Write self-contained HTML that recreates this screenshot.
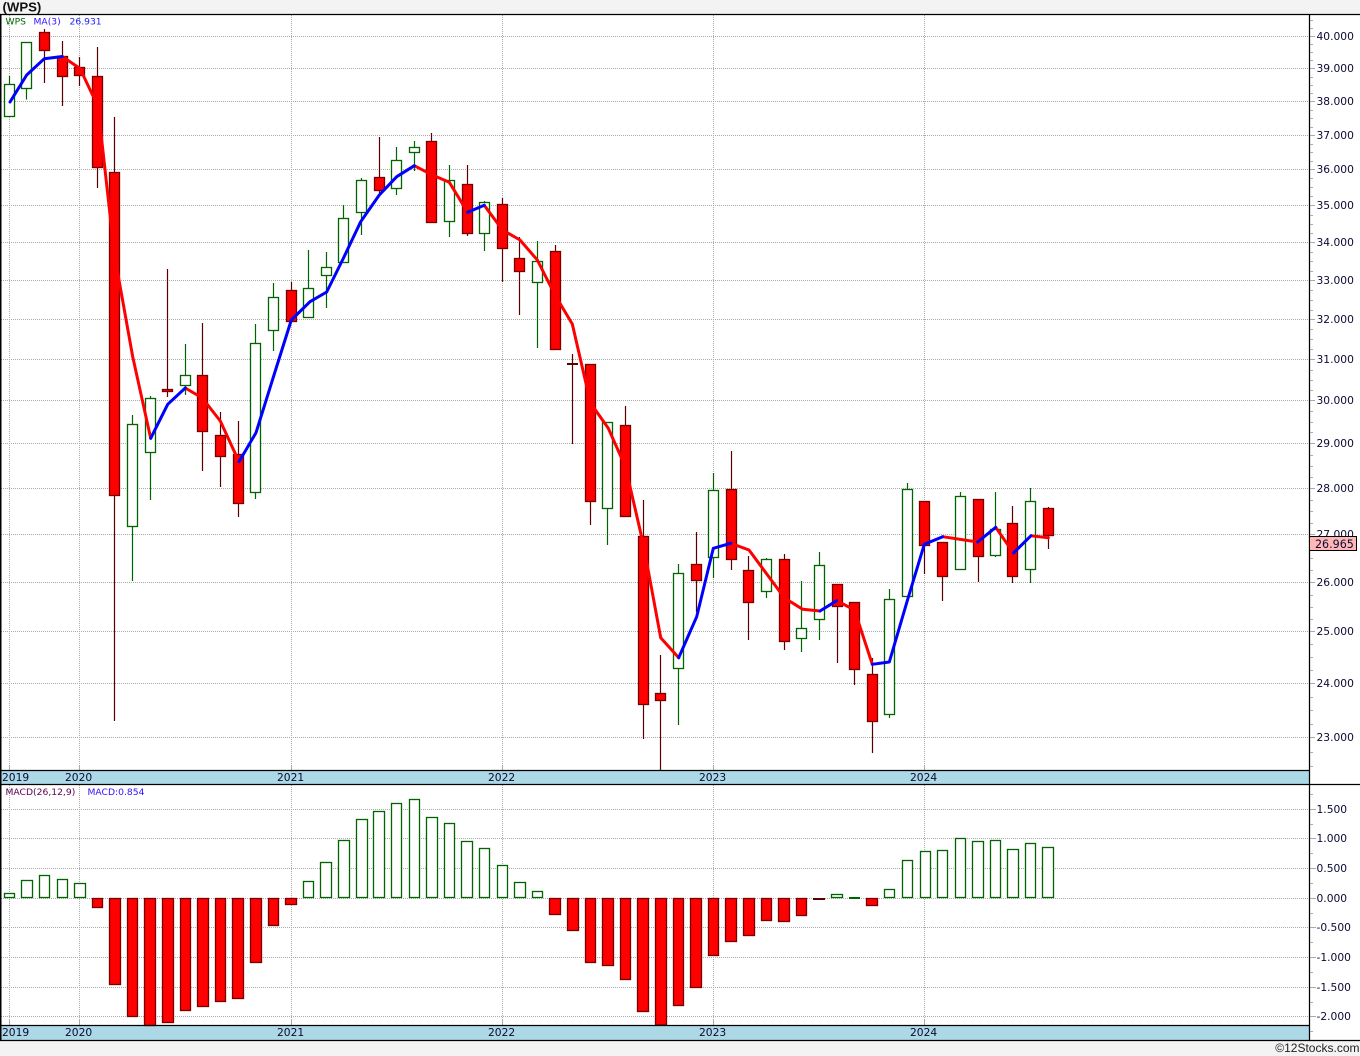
<!DOCTYPE html>
<html><head><meta charset="utf-8"><title>(WPS)</title>
<style>
html,body{margin:0;padding:0;background:#f3f3f3;width:1360px;height:1056px;overflow:hidden}
svg{display:block;position:absolute;left:0;top:0}
.ax{font:10.7px "DejaVu Sans",sans-serif;fill:#0a0a33}
.lg{font:9.2px "DejaVu Sans",sans-serif}
</style></head><body>
<svg width="1360" height="1056" viewBox="0 0 1360 1056" xmlns="http://www.w3.org/2000/svg">
<rect x="0" y="14" width="1360" height="1027" fill="#fff"/>
<text x="2.5" y="11.5" font-family="'Liberation Sans',sans-serif" font-weight="700" font-size="13.2" fill="#111">(WPS)</text>
<!-- bands -->
<rect x="1" y="771" width="1308" height="13" fill="#add8e6"/>
<rect x="1" y="1026" width="1308" height="14" fill="#add8e6"/>
<!-- grid -->
<g stroke="#aaa" stroke-width="1" stroke-dasharray="1 1" fill="none" shape-rendering="crispEdges">
<path d="M1 36.5H1309M1 68.5H1309M1 101.5H1309M1 135.5H1309M1 169.5H1309M1 205.5H1309M1 242.5H1309M1 280.5H1309M1 319.5H1309M1 359.5H1309M1 400.5H1309M1 443.5H1309M1 488.5H1309M1 534.5H1309M1 582.5H1309M1 631.5H1309M1 683.5H1309M1 737.5H1309"/>
<path d="M1 809.5H1309M1 838.5H1309M1 868.5H1309M1 898.5H1309M1 927.5H1309M1 957.5H1309M1 987.5H1309M1 1016.5H1309"/>
<path d="M9.5 15V770M79.5 15V770M291.5 15V770M502.5 15V770M713.5 15V770M924.5 15V770"/>
<path d="M9.5 785V1025M79.5 785V1025M291.5 785V1025M502.5 785V1025M713.5 785V1025M924.5 785V1025"/>
</g>
<path d="M9.5 765V770M79.5 765V770M291.5 765V770M502.5 765V770M713.5 765V770M924.5 765V770M9.5 1020V1025M79.5 1020V1025M291.5 1020V1025M502.5 1020V1025M713.5 1020V1025M924.5 1020V1025" stroke="#aaa" fill="none" shape-rendering="crispEdges"/>
<!-- wicks -->
<path stroke-width="1.2" stroke="#006400" fill="none" d="M9.5 76V116M26.5 43V99.5M132.5 415V581M150.5 396V500M185.5 344V395M255.5 324V499M273.5 283V351M308.5 250V318M326.5 252V308M343.5 205V263M361.5 178V235M396.5 147V195M414.5 141V171M449.5 165V237M484.5 201V251M537.5 241V348M607.5 423V545M678.5 564V725M713.5 473V578M766.5 558V598M801.5 581V652M819.5 552V640M889.5 589V718M907.5 483V597M960.5 492V570M995.5 492V557M1030.5 488V583"/>
<path stroke-width="1.2" stroke="#5a0000" fill="none" d="M44.5 29V83M62.5 41V106M79.5 57V86M97.5 47V188M114.5 117V721M167.5 269V397M202.5 323V471M220.5 412V487M238.5 421V517M291.5 282V322M379.5 137V193M431.5 133V223M467.5 165V236M502.5 198V282M519.5 237V315M555.5 245V350M572.5 354V444M590.5 364V525M625.5 406V517M643.5 500V739M660.5 655V771M696.5 532V612M731.5 451V570M748.5 556V640M784.5 554V650M837.5 584V663M854.5 602V685M872.5 658V753M924.5 501V574M942.5 542V601M978.5 499V582M1012.5 506V583M1048.5 507V549"/>
<!-- green candle bodies -->
<g fill="#fff" stroke="#006400" stroke-width="1.3">
<rect x="4.5" y="84.5" width="10" height="32"/>
<rect x="21.5" y="42.5" width="10" height="46"/>
<rect x="127.5" y="424.5" width="10" height="102"/>
<rect x="145.5" y="398.5" width="10" height="54"/>
<rect x="180.5" y="375.5" width="10" height="10"/>
<rect x="250.5" y="343.5" width="10" height="149"/>
<rect x="268.5" y="297.5" width="10" height="33"/>
<rect x="303.5" y="288.5" width="10" height="29"/>
<rect x="321.5" y="267.5" width="10" height="8"/>
<rect x="338.5" y="218.5" width="10" height="44"/>
<rect x="356.5" y="180.5" width="10" height="32"/>
<rect x="391.5" y="160.5" width="10" height="28"/>
<rect x="409.5" y="147.5" width="10" height="5"/>
<rect x="444.5" y="180.5" width="10" height="41"/>
<rect x="479.5" y="202.5" width="10" height="31"/>
<rect x="532.5" y="261.5" width="10" height="21"/>
<rect x="602.5" y="422.5" width="10" height="86"/>
<rect x="673.5" y="573.5" width="10" height="95"/>
<rect x="708.5" y="490.5" width="10" height="67"/>
<rect x="761.5" y="559.5" width="10" height="32"/>
<rect x="796.5" y="628.5" width="10" height="10"/>
<rect x="814.5" y="565.5" width="10" height="54"/>
<rect x="884.5" y="599.5" width="10" height="115"/>
<rect x="902.5" y="489.5" width="10" height="107"/>
<rect x="955.5" y="496.5" width="10" height="73"/>
<rect x="990.5" y="529.5" width="10" height="26"/>
<rect x="1025.5" y="501.5" width="10" height="68"/>
</g>
<!-- red candle bodies -->
<g fill="#f00" stroke="#7a0000" stroke-width="1.3">
<rect x="39.5" y="32.5" width="10" height="18"/>
<rect x="57.5" y="56.5" width="10" height="20"/>
<rect x="74.5" y="67.5" width="10" height="8"/>
<rect x="92.5" y="76.5" width="10" height="91"/>
<rect x="109.5" y="172.5" width="10" height="323"/>
<rect x="162.5" y="389.5" width="10" height="2"/>
<rect x="197.5" y="375.5" width="10" height="56"/>
<rect x="215.5" y="435.5" width="10" height="21"/>
<rect x="233.5" y="454.5" width="10" height="49"/>
<rect x="286.5" y="290.5" width="10" height="31"/>
<rect x="374.5" y="177.5" width="10" height="13"/>
<rect x="426.5" y="141.5" width="10" height="81"/>
<rect x="462.5" y="184.5" width="10" height="49"/>
<rect x="497.5" y="204.5" width="10" height="44"/>
<rect x="514.5" y="258.5" width="10" height="13"/>
<rect x="550.5" y="251.5" width="10" height="98"/>
<rect x="585.5" y="364.5" width="10" height="137"/>
<rect x="620.5" y="425.5" width="10" height="91"/>
<rect x="638.5" y="536.5" width="10" height="168"/>
<rect x="655.5" y="693.5" width="10" height="7"/>
<rect x="691.5" y="564.5" width="10" height="16"/>
<rect x="726.5" y="489.5" width="10" height="70"/>
<rect x="743.5" y="570.5" width="10" height="32"/>
<rect x="779.5" y="559.5" width="10" height="82"/>
<rect x="832.5" y="584.5" width="10" height="22"/>
<rect x="849.5" y="602.5" width="10" height="67"/>
<rect x="867.5" y="674.5" width="10" height="47"/>
<rect x="919.5" y="501.5" width="10" height="44"/>
<rect x="937.5" y="542.5" width="10" height="34"/>
<rect x="973.5" y="499.5" width="10" height="57"/>
<rect x="1007.5" y="523.5" width="10" height="53"/>
<rect x="1043.5" y="508.5" width="10" height="27"/>
</g>
<path d="M567 364H578" stroke="#5a0000" stroke-width="2" fill="none"/>
<!-- moving average -->
<g fill="none" stroke-width="3" stroke-linejoin="round" stroke-linecap="round">
<path stroke="#f00" d="M62.3 56.5L80 68.5L93.5 97L97.5 102L114.5 255L132.7 356.7L150.7 438.3"/>
<path stroke="#f00" d="M185.3 388L202.3 398L220.3 421L239 461.7"/>
<path stroke="#f00" d="M414.3 165.7L431.7 174.7L449.3 182.3L467.7 212.3"/>
<path stroke="#f00" d="M484.3 205.3L502.5 230L520 240L537.3 260L555 295L572.3 324L590.5 403L608.3 428.3L625.5 467L643.5 545L660.7 637.7L678.7 657.7"/>
<path stroke="#f00" d="M730.7 543.3L749 550L784.5 598L802.7 609.3L820 611"/>
<path stroke="#f00" d="M836.7 600.7L854.5 610L872.3 664.3"/>
<path stroke="#f00" d="M942.7 536.7L977.7 542"/>
<path stroke="#f00" d="M995.7 527.3L1013.5 553"/>
<path stroke="#f00" d="M1031 535.7L1048.3 537.7"/>
<path stroke="#00f" d="M10 102L26.7 75L44.3 58.7L62.3 56.5"/>
<path stroke="#00f" d="M150.7 438.3L167.7 404.3L185.3 388"/>
<path stroke="#00f" d="M239 461.7L256 432.7L274 375L291.3 320L310 301.7L326.7 292L343.5 258L360.7 221.7L379.3 195L396.7 176.7L414.3 165.7"/>
<path stroke="#00f" d="M467.7 212.3L484.3 205.3"/>
<path stroke="#00f" d="M678.7 657.7L696.7 616.7L713.3 548.3L730.7 543.3"/>
<path stroke="#00f" d="M820 611L836.7 600.7"/>
<path stroke="#00f" d="M872.3 664.3L889.3 662L907.5 600L924.3 544.3L942.7 536.7"/>
<path stroke="#00f" d="M977.7 542L995.7 527.3"/>
<path stroke="#00f" d="M1013.5 553L1031 535.7"/>
</g>
<!-- MACD bars -->
<g fill="#fff" stroke="#006400" stroke-width="1.3">
<rect x="4.5" y="893.5" width="10" height="4"/>
<rect x="21.5" y="880.5" width="11" height="17"/>
<rect x="39.5" y="875.5" width="10" height="22"/>
<rect x="57.5" y="879.5" width="10" height="18"/>
<rect x="74.5" y="883.5" width="11" height="14"/>
<rect x="303.5" y="881.5" width="10" height="16"/>
<rect x="320.5" y="862.5" width="11" height="35"/>
<rect x="338.5" y="840.5" width="11" height="57"/>
<rect x="356.5" y="819.5" width="11" height="78"/>
<rect x="373.5" y="811.5" width="11" height="86"/>
<rect x="391.5" y="803.5" width="10" height="94"/>
<rect x="409.5" y="799.5" width="10" height="98"/>
<rect x="426.5" y="817.5" width="11" height="80"/>
<rect x="444.5" y="823.5" width="10" height="74"/>
<rect x="461.5" y="841.5" width="11" height="56"/>
<rect x="479.5" y="848.5" width="10" height="49"/>
<rect x="497.5" y="865.5" width="10" height="32"/>
<rect x="514.5" y="882.5" width="11" height="15"/>
<rect x="532.5" y="891.5" width="10" height="6"/>
<rect x="831.5" y="894.5" width="11" height="3"/>
<rect x="884.5" y="889.5" width="10" height="8"/>
<rect x="902.5" y="860.5" width="10" height="37"/>
<rect x="920.5" y="851.5" width="10" height="46"/>
<rect x="937.5" y="850.5" width="10" height="47"/>
<rect x="955.5" y="838.5" width="10" height="59"/>
<rect x="972.5" y="841.5" width="11" height="56"/>
<rect x="990.5" y="840.5" width="10" height="57"/>
<rect x="1007.5" y="849.5" width="11" height="48"/>
<rect x="1025.5" y="843.5" width="10" height="54"/>
<rect x="1042.5" y="847.5" width="11" height="50"/>
</g>
<g fill="#f00" stroke="#7a0000" stroke-width="1.3">
<rect x="92.5" y="898.5" width="10" height="9"/>
<rect x="109.5" y="898.5" width="11" height="86"/>
<rect x="127.5" y="898.5" width="10" height="118"/>
<rect x="144.5" y="898.5" width="11" height="127"/>
<rect x="162.5" y="898.5" width="11" height="124"/>
<rect x="180.5" y="898.5" width="10" height="112"/>
<rect x="197.5" y="898.5" width="11" height="108"/>
<rect x="215.5" y="898.5" width="10" height="103"/>
<rect x="232.5" y="898.5" width="11" height="100"/>
<rect x="250.5" y="898.5" width="11" height="64"/>
<rect x="268.5" y="898.5" width="10" height="27"/>
<rect x="285.5" y="898.5" width="11" height="6"/>
<rect x="549.5" y="898.5" width="11" height="16"/>
<rect x="567.5" y="898.5" width="11" height="32"/>
<rect x="585.5" y="898.5" width="10" height="64"/>
<rect x="602.5" y="898.5" width="11" height="67"/>
<rect x="620.5" y="898.5" width="10" height="81"/>
<rect x="637.5" y="898.5" width="11" height="113"/>
<rect x="655.5" y="898.5" width="11" height="126.5"/>
<rect x="673.5" y="898.5" width="10" height="107"/>
<rect x="690.5" y="898.5" width="11" height="89"/>
<rect x="708.5" y="898.5" width="10" height="57"/>
<rect x="725.5" y="898.5" width="11" height="43"/>
<rect x="743.5" y="898.5" width="11" height="37"/>
<rect x="761.5" y="898.5" width="10" height="22"/>
<rect x="778.5" y="898.5" width="11" height="23"/>
<rect x="796.5" y="898.5" width="10" height="17"/>
<rect x="866.5" y="898.5" width="11" height="7"/>
</g>
<path d="M813 899H825" stroke="#5a0000" stroke-width="2" fill="none" shape-rendering="crispEdges"/>
<path d="M849 898H860" stroke="#006400" stroke-width="2" fill="none" shape-rendering="crispEdges"/>
<!-- frame -->
<g stroke="#000" stroke-width="1.25" fill="none">
<path d="M0 14.5H1360"/>
<path d="M0.75 14V1041" stroke-width="1.5"/>
<path d="M1309.5 14V1041"/>
<path d="M0 770.5H1309"/>
<path d="M0 784.5H1360"/>
<path d="M0 1025.5H1309"/>
<path d="M0 1040.5H1360"/>
</g>
<!-- axis ticks -->
<path shape-rendering="crispEdges" stroke="#aaa" fill="none" d="M1310 36.5H1315M1310 68.5H1315M1310 101.5H1315M1310 135.5H1315M1310 169.5H1315M1310 205.5H1315M1310 242.5H1315M1310 280.5H1315M1310 319.5H1315M1310 359.5H1315M1310 400.5H1315M1310 443.5H1315M1310 488.5H1315M1310 534.5H1315M1310 582.5H1315M1310 631.5H1315M1310 683.5H1315M1310 737.5H1315M1310 20.5H1313M1310 28.5H1313M1310 44.5H1313M1310 52.5H1313M1310 60.5H1313M1310 77.5H1313M1310 85.5H1313M1310 93.5H1313M1310 110.5H1313M1310 118.5H1313M1310 127.5H1313M1310 144.5H1313M1310 152.5H1313M1310 161.5H1313M1310 178.5H1313M1310 187.5H1313M1310 196.5H1313M1310 215.5H1313M1310 224.5H1313M1310 233.5H1313M1310 252.5H1313M1310 261.5H1313M1310 271.5H1313M1310 290.5H1313M1310 300.5H1313M1310 310.5H1313M1310 329.5H1313M1310 339.5H1313M1310 349.5H1313M1310 370.5H1313M1310 380.5H1313M1310 390.5H1313M1310 411.5H1313M1310 422.5H1313M1310 432.5H1313M1310 455.5H1313M1310 466.5H1313M1310 477.5H1313M1310 500.5H1313M1310 511.5H1313M1310 523.5H1313M1310 546.5H1313M1310 558.5H1313M1310 570.5H1313M1310 595.5H1313M1310 607.5H1313M1310 619.5H1313M1310 644.5H1313M1310 657.5H1313M1310 670.5H1313M1310 697.5H1313M1310 710.5H1313M1310 724.5H1313M1310 752.5H1313M1310 766.5H1313"/>
<path shape-rendering="crispEdges" stroke="#aaa" fill="none" d="M1310 809.5H1316M1310 838.5H1316M1310 868.5H1316M1310 898.5H1316M1310 927.5H1316M1310 957.5H1316M1310 987.5H1316M1310 1016.5H1316M1310 794.5H1313M1310 824.5H1313M1310 853.5H1313M1310 883.5H1313M1310 913.5H1313M1310 942.5H1313M1310 972.5H1313M1310 1002.5H1313M1310 1031.5H1313"/>
<!-- axis labels -->
<g class="ax">
<text x="1316.5" y="40">40.000</text>
<text x="1316.5" y="72">39.000</text>
<text x="1316.5" y="105">38.000</text>
<text x="1316.5" y="139">37.000</text>
<text x="1316.5" y="173">36.000</text>
<text x="1316.5" y="209">35.000</text>
<text x="1316.5" y="246">34.000</text>
<text x="1316.5" y="284">33.000</text>
<text x="1316.5" y="323">32.000</text>
<text x="1316.5" y="363">31.000</text>
<text x="1316.5" y="404">30.000</text>
<text x="1316.5" y="447">29.000</text>
<text x="1316.5" y="492">28.000</text>
<text x="1316.5" y="538">27.000</text>
<text x="1316.5" y="586">26.000</text>
<text x="1316.5" y="635">25.000</text>
<text x="1316.5" y="687">24.000</text>
<text x="1316.5" y="741">23.000</text>
<text x="1316.5" y="813">1.500</text>
<text x="1316.5" y="842">1.000</text>
<text x="1316.5" y="872">0.500</text>
<text x="1316.5" y="902">0.000</text>
<text x="1316.5" y="931">-0.500</text>
<text x="1316.5" y="961">-1.000</text>
<text x="1316.5" y="991">-1.500</text>
<text x="1316.5" y="1020">-2.000</text>
<text x="2" y="781">2019</text>
<text x="65" y="781">2020</text>
<text x="277" y="781">2021</text>
<text x="488" y="781">2022</text>
<text x="699" y="781">2023</text>
<text x="910" y="781">2024</text>
<text x="2" y="1036">2019</text>
<text x="65" y="1036">2020</text>
<text x="277" y="1036">2021</text>
<text x="488" y="1036">2022</text>
<text x="699" y="1036">2023</text>
<text x="910" y="1036">2024</text>
</g>
<rect x="1309.5" y="536.5" width="47" height="14" fill="#ffb6b6" stroke="#000" shape-rendering="crispEdges"/>
<text x="1315" y="548" class="ax" style="font-size:11.1px">26.965</text>
<!-- legends -->
<g class="lg">
<text x="5.5" y="24.5" fill="#006400">WPS</text>
<text x="33.5" y="24.5" fill="#3010ff">MA(3)</text>
<text x="69.5" y="24.5" fill="#2020ff">26.931</text>
<text x="5.5" y="795" fill="#5a0050">MACD(26,12,9)</text>
<text x="87.5" y="795" fill="#3010ff">MACD:0.854</text>
</g>
<text x="1359.5" y="1052" text-anchor="end" font-family="'Liberation Sans',sans-serif" font-size="12" fill="#222">©12Stocks.com</text>
</svg>
</body></html>
